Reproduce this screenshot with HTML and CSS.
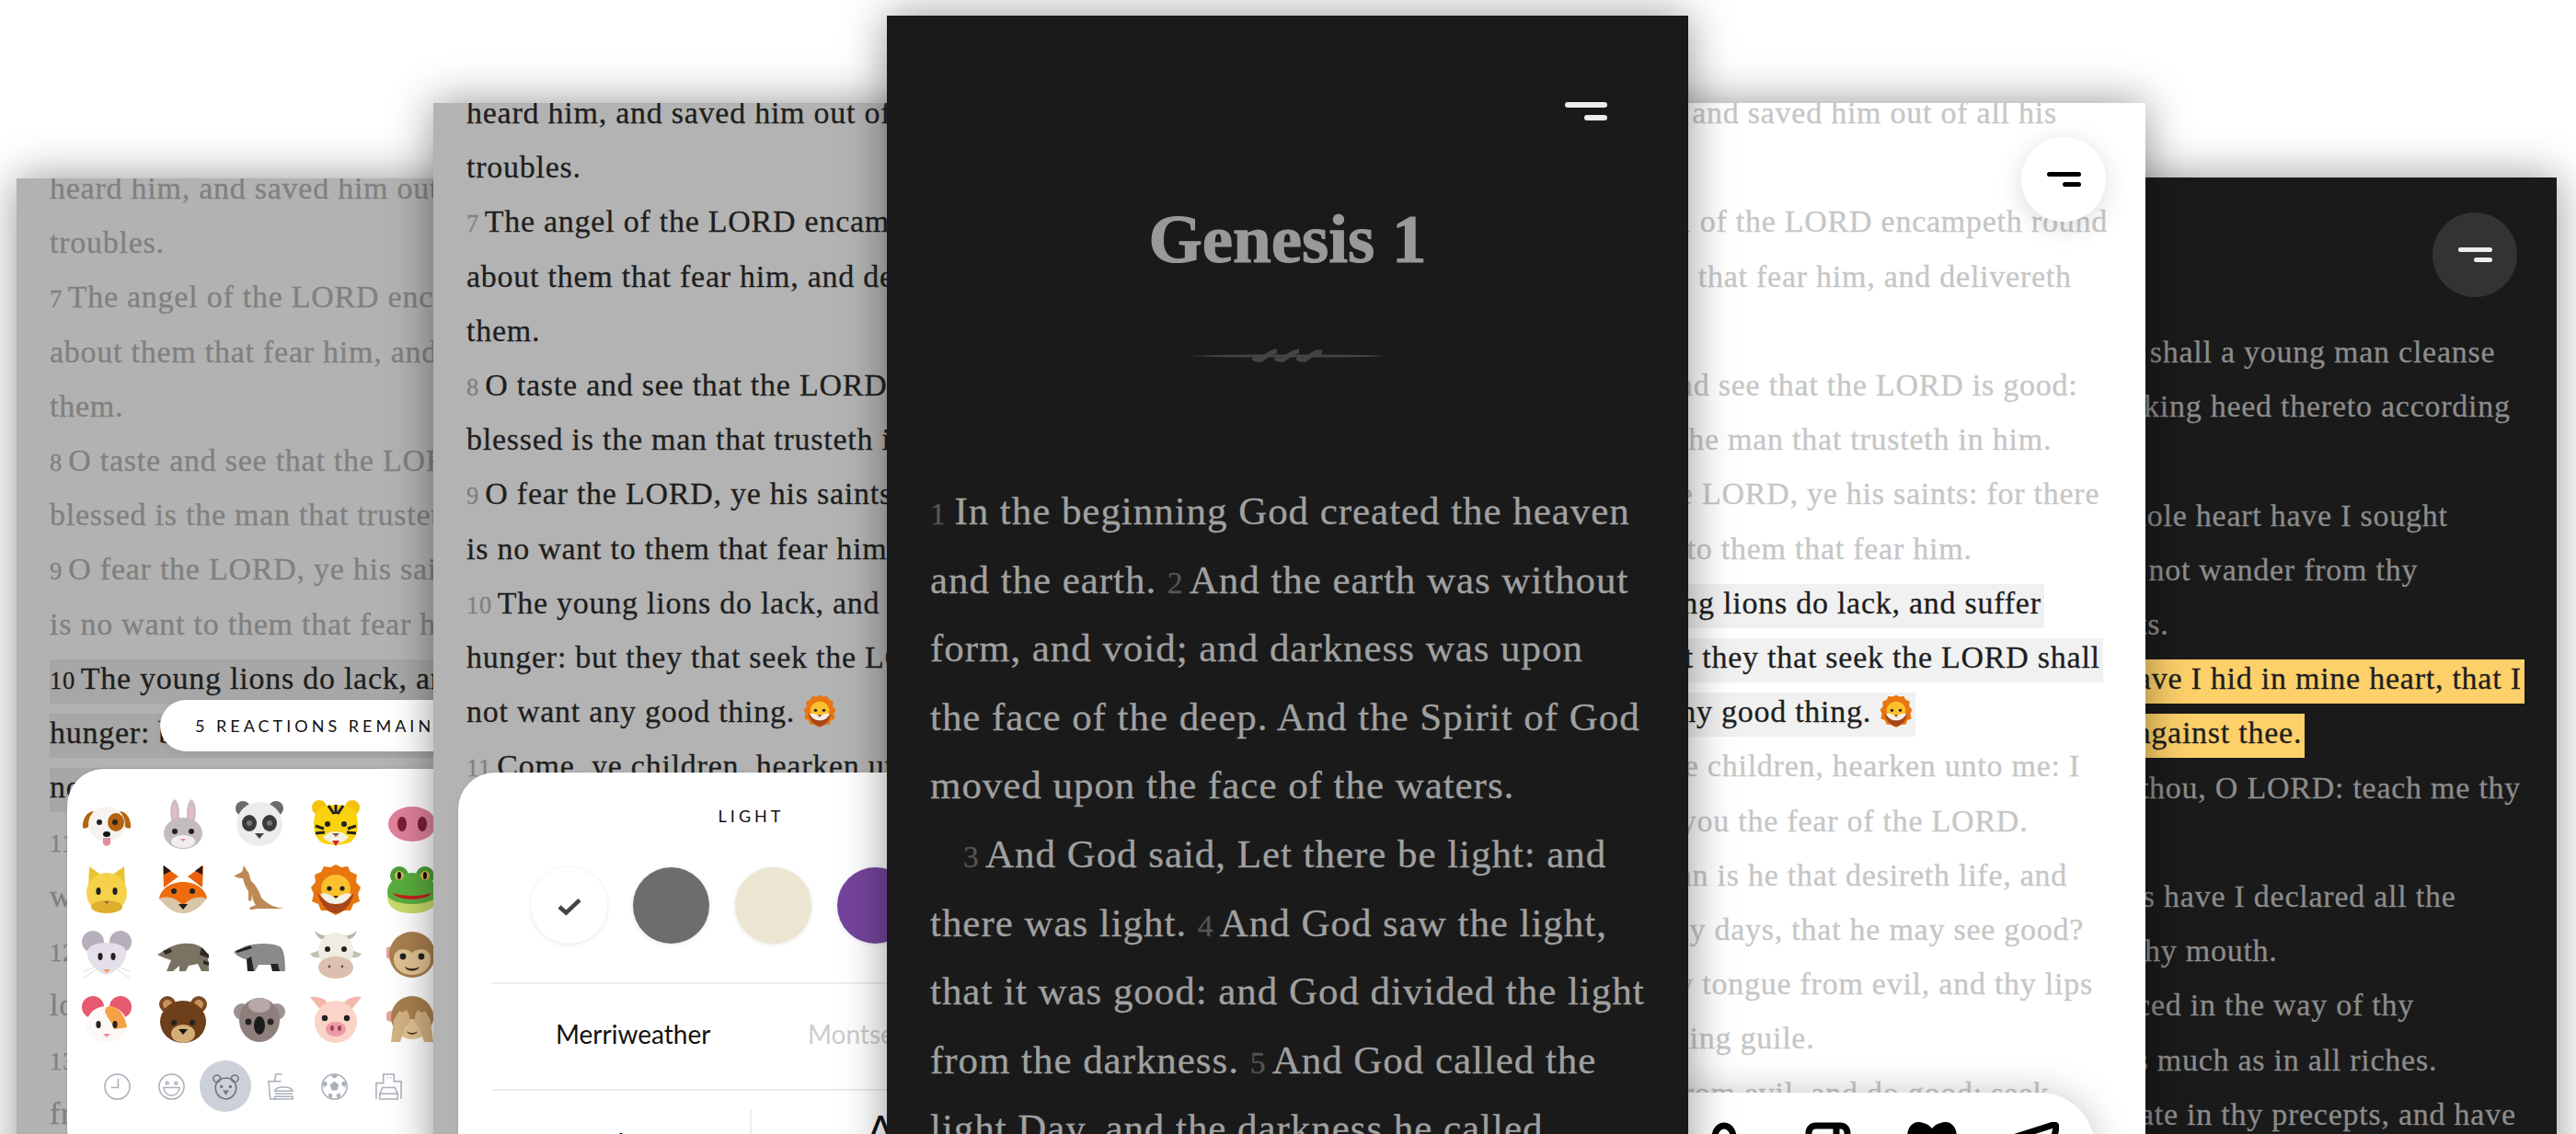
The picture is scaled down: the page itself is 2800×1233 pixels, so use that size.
FILE: index.html
```html
<!DOCTYPE html>
<html lang="en">

<head>
    <meta charset="UTF-8">
    <title>Bible reader screens</title>
    <link rel="stylesheet" href="styles.css">
</head>

<body>
    <svg class="sprites" width="0" height="0">
        <symbol id="e-dog" viewBox="0 0 56 56">
            <path d="M14 14C6 14 1 24 2 32c3 2 7-1 9-5z" fill="#b4630f"/><path d="M42 14c8 0 13 10 12 18-3 2-7-1-9-5z" fill="#b4630f"/>
            <ellipse cx="28" cy="28" rx="20" ry="19" fill="#f6f3ef"/><ellipse cx="38" cy="26" rx="9" ry="10" fill="#b4630f"/>
            <circle cx="20" cy="26" r="3" fill="#222"/><circle cx="37" cy="26" r="3" fill="#222"/><ellipse cx="28" cy="39" rx="4" ry="3" fill="#111"/>
            <path d="M24 43h8v5c0 5-8 5-8 0z" fill="#e58a9b"/>
        </symbol>
        <symbol id="e-rabbit" viewBox="0 0 56 56">
            <path d="M17 30C12 16 14 4 19 1c5 3 6 15 4 28z" fill="#c9bfc2"/><path d="M39 30c5-14 3-26-2-29-5 3-6 15-4 28z" fill="#c9bfc2"/>
            <path d="M18 24c-2-8-1-14 1-18 2 4 3 11 2 18zM38 24c2-8 1-14-1-18-2 4-3 11-2 18z" fill="#eab9c4"/>
            <ellipse cx="28" cy="38" rx="21" ry="17" fill="#c4bbbe"/><ellipse cx="28" cy="47" rx="13" ry="7" fill="#f1ecee"/>
            <circle cx="19" cy="36" r="3" fill="#222"/><circle cx="37" cy="36" r="3" fill="#222"/><path d="M25 44h6l-3 3z" fill="#e58a9b"/>
        </symbol>
        <symbol id="e-panda" viewBox="0 0 56 56">
            <circle cx="10" cy="11" r="8" fill="#6b6b6b"/><circle cx="46" cy="11" r="8" fill="#6b6b6b"/>
            <ellipse cx="28" cy="28" rx="25" ry="24" fill="#ececee"/><ellipse cx="17" cy="27" rx="8" ry="9" fill="#3a3a3c"/><ellipse cx="39" cy="27" rx="8" ry="9" fill="#3a3a3c"/>
            <circle cx="17" cy="27" r="3" fill="#777"/><circle cx="39" cy="27" r="3" fill="#777"/><path d="M23 38h10l-5 6z" fill="#444"/>
        </symbol>
        <symbol id="e-tiger" viewBox="0 0 56 56">
            <circle cx="10" cy="10" r="8" fill="#f4c20d"/><circle cx="46" cy="10" r="8" fill="#f4c20d"/>
            <path d="M6 16C10 4 46 4 50 16c3 10 3 22-4 30-5 6-31 6-36 0-7-8-7-20-4-30z" fill="#fad20f"/>
            <path d="M28 7v10M20 8l6 9M36 8l-6 9M6 30l9 3M6 38l10-1M50 30l-9 3M50 38l-10-1" stroke="#222" stroke-width="3"/>
            <circle cx="19" cy="28" r="3" fill="#222"/><circle cx="37" cy="28" r="3" fill="#222"/>
            <path d="M14 42c8-8 20-8 28 0-6 9-22 9-28 0z" fill="#f5efe3"/><path d="M24 38h8l-4 4z" fill="#7a5b4a"/><path d="M24 46h8l-4 6z" fill="#d2232a"/>
        </symbol>
        <symbol id="e-snout" viewBox="0 0 56 56">
            <ellipse cx="28" cy="28" rx="26" ry="19" fill="#e0829a"/><ellipse cx="17" cy="28" rx="5" ry="8" fill="#7b1f38"/><ellipse cx="39" cy="28" rx="5" ry="8" fill="#7b1f38"/>
        </symbol>
        <symbol id="e-cat" viewBox="0 0 56 56">
            <path d="M8 26L9 3l14 10zM48 26L47 3 33 13z" fill="#e9c233"/>
            <ellipse cx="28" cy="32" rx="22" ry="22" fill="#f6d24a"/><ellipse cx="28" cy="47" rx="17" ry="7" fill="#dfae2e"/>
            <ellipse cx="19" cy="30" rx="2.6" ry="4" fill="#222"/><ellipse cx="37" cy="30" rx="2.6" ry="4" fill="#222"/><path d="M25 41h6l-3 3z" fill="#8a6a4f"/>
        </symbol>
        <symbol id="e-fox" viewBox="0 0 56 56">
            <path d="M7 26L6 2l17 12zM49 26L50 2 33 14z" fill="#e9620b"/><path d="M7 12l0-10 8 6zM49 12l0-10-8 6z" fill="#2b1a12"/>
            <path d="M2 38C6 14 50 14 54 38L28 54z" fill="#ef6c0c"/><path d="M2 38c10-4 20 0 26 8 6-8 16-12 26-8-8 10-16 16-26 16S10 48 2 38z" fill="#d8c6a8"/>
            <circle cx="18" cy="30" r="3" fill="#222"/><circle cx="38" cy="30" r="3" fill="#222"/><path d="M23 44h10l-5 6z" fill="#1c1c1c"/>
        </symbol>
        <symbol id="e-kangaroo" viewBox="0 0 56 56">
            <path d="M1 13l8-4 2-7 3 5c4 4 3 8 5 12 6 5 9 12 11 18 7 8 16 11 25 12H26l-6 1c-3 0-4-2-1-3l5-2c-3-4-4-8-4-12l-1 8-3-1 0-10c-4-6-5-10-6-14-4 0-8-1-10-3z" fill="#bd8a55"/>
        </symbol>
        <symbol id="e-lion" viewBox="0 0 56 56">
            <path d="M28 1l6 3 7-1 3 6 7 3-1 8 5 6-3 7 2 8-7 3-3 7-7 0-9 5-9-5-7 0-3-7-7-3 2-8-3-7 5-6-1-8 7-3 3-6 7 1z" fill="#e87611"/>
            <path d="M8 32c4 14 12 22 20 22s16-8 20-22l-6 6H14z" fill="#a8451a"/>
            <ellipse cx="28" cy="27" rx="16" ry="15" fill="#fbc02d"/><path d="M11 33c6-2 12 1 17 5 5-4 11-7 17-5-4 8-10 11-17 11s-13-3-17-11z" fill="#f4f0e6"/>
            <circle cx="21" cy="27" r="2.6" fill="#222"/><circle cx="35" cy="27" r="2.6" fill="#222"/><path d="M25 35h6l-3 3z" fill="#3a2a20"/>
        </symbol>
        <symbol id="e-frog" viewBox="0 0 56 56">
            <circle cx="14" cy="13" r="10" fill="#4c9f38"/><circle cx="42" cy="13" r="10" fill="#4c9f38"/>
            <ellipse cx="28" cy="31" rx="27" ry="21" fill="#59ae3e"/><path d="M1 35c8 12 46 12 54 0 0 14-12 19-27 19S1 49 1 35z" fill="#c8dc6d"/>
            <circle cx="14" cy="13" r="5" fill="#d9b64a"/><circle cx="42" cy="13" r="5" fill="#d9b64a"/><ellipse cx="14" cy="13" rx="2" ry="4" fill="#111"/><ellipse cx="42" cy="13" rx="2" ry="4" fill="#111"/>
            <path d="M7 32c12 4 30 4 42 0-4 9-38 9-42 0z" fill="#c6211f"/>
        </symbol>
        <symbol id="e-mouse" viewBox="0 0 56 56">
            <circle cx="13" cy="14" r="12" fill="#b6afbb"/><circle cx="43" cy="14" r="12" fill="#b6afbb"/>
            <path d="M7 24C10 12 46 12 49 24c2 12-12 24-21 26C19 48 5 36 7 24z" fill="#e4dfe8"/>
            <ellipse cx="21" cy="30" rx="2.6" ry="4" fill="#222"/><ellipse cx="35" cy="30" rx="2.6" ry="4" fill="#222"/><path d="M24 44h8l-4 4z" fill="#ee9a66"/>
            <path d="M3 46l13-5M2 54l15-10M53 46l-13-5M54 54L39 44" stroke="#ddd" stroke-width="1"/>
        </symbol>
        <symbol id="e-raccoon" viewBox="0 0 56 56">
            <path d="M0 28l10-6c12-8 30-8 38-2 6 4 8 12 8 26h-8l-4-8-10 2-3 6h-7l0-6-7 6h-7l5-12C8 32 4 30 0 28z" fill="#7a7263"/>
            <path d="M48 20l8 8v4l-10-4zM50 34l6 2v4l-6-2z" fill="#2e2b26"/><path d="M6 24l8-3 2 4-7 3z" fill="#2e2b26"/>
        </symbol>
        <symbol id="e-badger" viewBox="0 0 56 56">
            <path d="M0 25l12-6c12-4 30-4 38 0 5 3 6 14 6 27h-8l-3-7H27l-4 7h-8l3-12C10 33 4 30 0 25z" fill="#8a8a88"/>
            <path d="M2 24l16-6 2 3-16 5zM14 33l5-3 3 16h-7zM40 38h8l2 8h-8z" fill="#23231f"/>
        </symbol>
        <symbol id="e-cow" viewBox="0 0 56 56">
            <path d="M14 12C9 10 6 6 5 2c4 4 10 5 14 6zM42 12c5-2 8-6 9-10-4 4-10 5-14 6z" fill="#b9b5a7"/><path d="M11 23L0 27c3 5 9 5 14 3zM45 23l11 4c-3 5-9 5-14 3z" fill="#c4c0b2"/>
            <ellipse cx="28" cy="24" rx="19" ry="20" fill="#efece2"/><ellipse cx="28" cy="42" rx="19" ry="12" fill="#dcc0ad"/>
            <circle cx="19" cy="22" r="3" fill="#222"/><circle cx="37" cy="22" r="3" fill="#222"/><circle cx="21" cy="41" r="1.4" fill="#6a4c3c"/><circle cx="35" cy="41" r="1.4" fill="#6a4c3c"/>
        </symbol>
        <symbol id="e-monkey" viewBox="0 0 56 56">
            <circle cx="5" cy="26" r="7" fill="#e8a49a"/><circle cx="51" cy="26" r="7" fill="#e8a49a"/>
            <circle cx="28" cy="28" r="25" fill="#a97f4f"/><path d="M8 33c0-14 15-12 20-7 5-5 20-7 20 7 0 10-9 17-20 17S8 43 8 33z" fill="#e1c394"/>
            <circle cx="18" cy="30" r="3.4" fill="#222"/><circle cx="38" cy="30" r="3.4" fill="#222"/><path d="M20 41c5 3 11 3 16 0-2 6-14 6-16 0z" fill="#3a2518"/>
        </symbol>
        <symbol id="e-hamster" viewBox="0 0 56 56">
            <circle cx="13" cy="14" r="12" fill="#e6596f"/><circle cx="43" cy="14" r="12" fill="#e6596f"/>
            <path d="M6 34C6 6 50 6 50 34c0 12-12 18-22 18S6 46 6 34z" fill="#fbf8f5"/><path d="M28 14c10-4 20 8 22 22l-14 2c-2-8-8-12-10-20z" fill="#f6a144"/>
            <ellipse cx="19" cy="33" rx="2.6" ry="4" fill="#222"/><ellipse cx="37" cy="33" rx="2.6" ry="4" fill="#222"/><path d="M24 43h8l-4 4z" fill="#ee8f9c"/>
        </symbol>
        <symbol id="e-bear" viewBox="0 0 56 56">
            <circle cx="11" cy="11" r="9" fill="#7d4a22"/><circle cx="45" cy="11" r="9" fill="#7d4a22"/><circle cx="11" cy="11" r="5" fill="#c9925c"/><circle cx="45" cy="11" r="5" fill="#c9925c"/>
            <ellipse cx="28" cy="30" rx="25" ry="23" fill="#6e3f1b"/><ellipse cx="28" cy="43" rx="13" ry="10" fill="#d5ad78"/>
            <circle cx="18" cy="31" r="3" fill="#222"/><circle cx="38" cy="31" r="3" fill="#222"/><path d="M23 38h10l-5 6z" fill="#111"/>
        </symbol>
        <symbol id="e-koala" viewBox="0 0 56 56">
            <circle cx="9" cy="19" r="9" fill="#9d9290"/><circle cx="47" cy="19" r="9" fill="#9d9290"/>
            <ellipse cx="28" cy="28" rx="22" ry="24" fill="#8e7f7d"/><ellipse cx="28" cy="12" rx="12" ry="8" fill="#b6a9a7"/>
            <circle cx="16" cy="30" r="3.4" fill="#222"/><circle cx="40" cy="30" r="3.4" fill="#222"/><ellipse cx="28" cy="34" rx="6" ry="10" fill="#1c1c1c"/>
        </symbol>
        <symbol id="e-pig" viewBox="0 0 56 56">
            <path d="M12 18L0 3c6-1 16 0 20 8zM44 18L56 3c-6-1-16 0-20 8z" fill="#f4b7ab"/>
            <ellipse cx="28" cy="30" rx="23" ry="23" fill="#fbd3c8"/><circle cx="16" cy="26" r="3.2" fill="#222"/><circle cx="40" cy="26" r="3.2" fill="#222"/>
            <ellipse cx="28" cy="38" rx="11" ry="8" fill="#ee9aa6"/><ellipse cx="24" cy="37" rx="2" ry="3" fill="#9c3f56"/><ellipse cx="32" cy="37" rx="2" ry="3" fill="#9c3f56"/>
        </symbol>
        <symbol id="e-noevil" viewBox="0 0 56 56">
            <circle cx="5" cy="24" r="6" fill="#e8a49a"/><circle cx="51" cy="24" r="6" fill="#e8a49a"/>
            <circle cx="28" cy="25" r="23" fill="#a97f4f"/><ellipse cx="28" cy="38" rx="15" ry="11" fill="#e1c394"/>
            <path d="M5 52l3-24 6-10 4 2 3-3 3 3 2 10-6 6-5 16zM51 52l-3-24-6-10-4 2-3-3-3 3-2 10 6 6 5 16z" fill="#d4b282"/><path d="M22 40c4 3 8 3 12 0-2 5-10 5-12 0z" fill="#3a2518"/>
        </symbol>
    </svg>

    <div class="stage">

        <!-- far left, dimmed, reactions picker -->
        <section class="sheet sheet-far-left">
            <div class="verses">
                <div class="line">heard him, and saved him out of all his</div>
                <div class="line">troubles.</div>
                <div class="line"><span class="num">7</span> The angel of the LORD encampeth round</div>
                <div class="line">about them that fear him, and delivereth</div>
                <div class="line">them.</div>
                <div class="line"><span class="num">8</span> O taste and see that the LORD is good:</div>
                <div class="line">blessed is the man that trusteth in him.</div>
                <div class="line"><span class="num">9</span> O fear the LORD, ye his saints: for there</div>
                <div class="line">is no want to them that fear him.</div>
                <div class="line"><mark><span class="num">10</span> The young lions do lack, and suffer</mark></div>
                <div class="line"><mark>hunger: but they that seek the LORD shall</mark></div>
                <div class="line"><mark>not want any good thing.</mark></div>
                <div class="line"><span class="num">11</span> Come, ye children, hearken unto me: I</div>
                <div class="line">will teach you the fear of the LORD.</div>
                <div class="line"><span class="num">12</span> What man is he that desireth life, and</div>
                <div class="line">loveth many days, that he may see good?</div>
                <div class="line"><span class="num">13</span> Keep thy tongue from evil, and thy lips</div>
                <div class="line">from speaking guile.</div>
            </div>

            <div class="reactions-pill">5 REACTIONS REMAINING</div>

            <div class="picker">
                <div class="emoji-grid">
                    <svg class="emoji"><use href="#e-dog"/></svg>
                    <svg class="emoji"><use href="#e-rabbit"/></svg>
                    <svg class="emoji"><use href="#e-panda"/></svg>
                    <svg class="emoji"><use href="#e-tiger"/></svg>
                    <svg class="emoji"><use href="#e-snout"/></svg>
                    <svg class="emoji"><use href="#e-cat"/></svg>
                    <svg class="emoji"><use href="#e-fox"/></svg>
                    <svg class="emoji"><use href="#e-kangaroo"/></svg>
                    <svg class="emoji"><use href="#e-lion"/></svg>
                    <svg class="emoji"><use href="#e-frog"/></svg>
                    <svg class="emoji"><use href="#e-mouse"/></svg>
                    <svg class="emoji"><use href="#e-raccoon"/></svg>
                    <svg class="emoji"><use href="#e-badger"/></svg>
                    <svg class="emoji"><use href="#e-cow"/></svg>
                    <svg class="emoji"><use href="#e-monkey"/></svg>
                    <svg class="emoji"><use href="#e-hamster"/></svg>
                    <svg class="emoji"><use href="#e-bear"/></svg>
                    <svg class="emoji"><use href="#e-koala"/></svg>
                    <svg class="emoji"><use href="#e-pig"/></svg>
                    <svg class="emoji"><use href="#e-noevil"/></svg>
                </div>
                <div class="emoji-tabs">
                    <span class="tab">
                        <svg viewBox="0 0 32 32"><circle cx="16" cy="16" r="14"/><path d="M17 7v10H9"/></svg>
                    </span>
                    <span class="tab">
                        <svg viewBox="0 0 32 32"><circle cx="16" cy="16" r="14"/><circle cx="11" cy="12" r="1.5"/><circle cx="21" cy="12" r="1.5"/><path d="M7 17h18c-1 12-17 12-18 0z"/></svg>
                    </span>
                    <span class="tab tab-active">
                        <svg viewBox="0 0 32 32"><circle cx="6" cy="7" r="4"/><circle cx="26" cy="7" r="4"/><path d="M6 11c3-6 17-6 20 0 4 8 0 18-10 19C6 29 2 19 6 11z"/><circle cx="11" cy="16" r="1"/><circle cx="21" cy="16" r="1"/><path d="M14 21h4l-2 3z"/></svg>
                    </span>
                    <span class="tab">
                        <svg viewBox="0 0 32 32"><path d="M2 10h15M3 10l2 20h6M10 10l1-8h7"/><path d="M10 21c1-6 19-6 20 0zM10 24h20M10 27h20v3H10z"/></svg>
                    </span>
                    <span class="tab">
                        <svg viewBox="0 0 32 32"><circle cx="16" cy="16" r="14"/><path class="solid" d="M16 10l5 4-2 6h-6l-2-6zM16 2l4 2-4 3-4-3zM29 11l-1 6-4-3 1-4zM3 11l1 6 4-3-1-4zM9 27l4 2 1-4-4-2zM23 27l-4 2-1-4 4-2z"/></svg>
                    </span>
                    <span class="tab">
                        <svg viewBox="0 0 32 32"><path d="M2 30V12h8V2h12v8h8v20"/><path d="M6 30v-6l3-7h14l3 7v6zM6 24h20M14 6h1M18 6h1"/></svg>
                    </span>
                </div>
            </div>
        </section>

        <!-- left, dimmed, theme and font settings -->
        <section class="sheet sheet-left">
            <div class="verses">
                <div class="line">heard him, and saved him out of all his</div>
                <div class="line">troubles.</div>
                <div class="line"><span class="num">7</span> The angel of the LORD encampeth round</div>
                <div class="line">about them that fear him, and delivereth</div>
                <div class="line">them.</div>
                <div class="line"><span class="num">8</span> O taste and see that the LORD is good:</div>
                <div class="line">blessed is the man that trusteth in him.</div>
                <div class="line"><span class="num">9</span> O fear the LORD, ye his saints: for there</div>
                <div class="line">is no want to them that fear him.</div>
                <div class="line"><span class="num">10</span> The young lions do lack, and suffer</div>
                <div class="line">hunger: but they that seek the LORD shall</div>
                <div class="line">not want any good thing. <svg class="emoji-inline"><use href="#e-lion"/></svg></div>
                <div class="line"><span class="num">11</span> Come, ye children, hearken unto me: I</div>
            </div>

            <div class="settings">
                <div class="settings-title">LIGHT</div>
                <div class="swatches">
                    <span class="swatch swatch-white">
                        <svg viewBox="0 0 30 24"><path d="M3 13l8 7L27 5"/></svg>
                    </span>
                    <span class="swatch swatch-grey"></span>
                    <span class="swatch swatch-cream"></span>
                    <span class="swatch swatch-purple"></span>
                </div>
                <div class="font-row">
                    <span class="font-name">Merriweather</span>
                    <span class="font-name font-off">Montserrat</span>
                </div>
                <div class="size-row">
                    <span class="size-small">A</span>
                    <span class="size-big">A</span>
                </div>
            </div>
        </section>

        <!-- right, white, highlighted verse -->
        <section class="sheet sheet-right">
            <div class="verses">
                <div class="line">heard him, and saved him out of all his</div>
                <div class="line">troubles.</div>
                <div class="line"><span class="num">7</span> The angel of the LORD encampeth round</div>
                <div class="line">about them that fear him, and delivereth</div>
                <div class="line">them.</div>
                <div class="line"><span class="num">8</span> O taste and see that the LORD is good:</div>
                <div class="line">blessed is the man that trusteth in him.</div>
                <div class="line"><span class="num">9</span> O fear the LORD, ye his saints: for there</div>
                <div class="line">is no want to them that fear him.</div>
                <div class="line"><mark><span class="num">10</span> The young lions do lack, and suffer</mark></div>
                <div class="line"><mark>hunger: but they that seek the LORD shall</mark></div>
                <div class="line"><mark>not want any good thing. <svg class="emoji-inline"><use href="#e-lion"/></svg></mark></div>
                <div class="line"><span class="num">11</span> Come, ye children, hearken unto me: I</div>
                <div class="line">will teach you the fear of the LORD.</div>
                <div class="line"><span class="num">12</span> What man is he that desireth life, and</div>
                <div class="line">loveth many days, that he may see good?</div>
                <div class="line"><span class="num">13</span> Keep thy tongue from evil, and thy lips</div>
                <div class="line">from speaking guile.</div>
                <div class="line"><span class="num">14</span> Depart from evil, and do good; seek</div>
            </div>

            <button class="menu-btn menu-btn-light"><span class="bar"></span><span class="bar bar-short"></span></button>

            <div class="action-bar">
                <svg class="action" viewBox="0 0 50 50"><path d="M15 50V16C15 8 21 4 25 4s10 4 10 12v34"/></svg>
                <svg class="action" viewBox="0 0 50 50"><path d="M4 50V12c0-5 3-8 8-8h26c5 0 8 3 8 8v38M34 4v22"/></svg>
                <svg class="action action-solid" viewBox="0 0 54 50"><path d="M27 7C23 2 17 0 12 0 5 0 0 7 0 16c0 14 17 28 27 34 10-6 27-20 27-34 0-9-5-16-12-16-5 0-11 2-15 7z"/></svg>
                <svg class="action" viewBox="0 0 50 50"><path d="M3 16L44 3c2 0 3 1 3 3L38 50"/></svg>
            </div>
        </section>

        <!-- far right, dark, yellow highlight -->
        <section class="sheet sheet-far-right">
            <button class="menu-btn menu-btn-dark"><span class="bar"></span><span class="bar bar-short"></span></button>
            <div class="verses">
                <div class="line"><span class="num">9</span> Wherewithal shall a young man cleanse</div>
                <div class="line">his way? by taking heed thereto according</div>
                <div class="line">to thy word.</div>
                <div class="line"><span class="num">10</span> With my whole heart have I sought</div>
                <div class="line">thee: O let me not wander from thy</div>
                <div class="line">commandments.</div>
                <div class="line"><mark><span class="num">11</span> Thy word have I hid in mine heart, that I</mark></div>
                <div class="line"><mark>might not sin against thee.</mark></div>
                <div class="line"><span class="num">12</span> Blessed art thou, O LORD: teach me thy</div>
                <div class="line">statutes.</div>
                <div class="line"><span class="num">13</span> With my lips have I declared all the</div>
                <div class="line">judgments of thy mouth.</div>
                <div class="line"><span class="num">14</span> I have rejoiced in the way of thy</div>
                <div class="line">testimonies, as much as in all riches.</div>
                <div class="line"><span class="num">15</span> I will meditate in thy precepts, and have</div>
            </div>
        </section>

        <!-- centre, dark, chapter opening -->
        <section class="sheet sheet-centre">
            <div class="centre-top">
                <div class="menu-plain"><span class="bar"></span><span class="bar bar-short"></span></div>
            </div>
            <h1 class="chapter-title">Genesis 1</h1>
            <svg class="flourish" viewBox="0 0 218 16">
                <path class="flourish-line" d="M0 8Q35 6.500 72 6.500L146 6.500Q185 6.500 218 8Q185 9.500 146 9.500L72 9.500Q35 9.500 0 8z"/>
                <path class="flourish-knot" d="M71 10Q77 15 84 9T97 3M95 10Q101 15 108 9T121 3M119 10Q125 15 132 9T146 4"/>
            </svg>
            <div class="verses verses-big">
                <div class="line"><span class="num">1</span> In the beginning God created the heaven</div>
                <div class="line">and the earth. <span class="num">2</span> And the earth was without</div>
                <div class="line">form, and void; and darkness was upon</div>
                <div class="line">the face of the deep. And the Spirit of God</div>
                <div class="line">moved upon the face of the waters.</div>
                <div class="line line-indent"><span class="num">3</span> And God said, Let there be light: and</div>
                <div class="line">there was light. <span class="num">4</span> And God saw the light,</div>
                <div class="line">that it was good: and God divided the light</div>
                <div class="line">from the darkness. <span class="num">5</span> And God called the</div>
                <div class="line">light Day, and the darkness he called</div>
            </div>
        </section>
    </div>
</body>

</html>
```

FILE: styles.css
```css
* {
    box-sizing: border-box;
}

html,
body {
    margin: 0;
    padding: 0;
    height: 100%;
    overflow: hidden;
    background-color: #fff;
}

.sprites {
    position: absolute;
}

.stage {
    position: relative;
    width: 2800px;
    height: 1233px;
    overflow: hidden;
    font-family: "Liberation Serif", serif;
}

/* the five phone screens sit on a free canvas */
.sheet {
    position: absolute;
    width: 691px;
    height: 1300px;
    overflow: hidden;
    box-shadow: 0 0 45px rgba(0, 0, 0, 0.42);
}

.sheet-far-left {
    left: 18px;
    top: 194px;
    z-index: 1;
    background-color: #b2b2b2;
    color: #808080;
}

.sheet-left {
    left: 471px;
    top: 112px;
    z-index: 2;
    background-color: #b3b3b3;
    color: #1e1e1e;
}

.sheet-right {
    left: 1641px;
    top: 112px;
    z-index: 2;
    background-color: #fff;
    color: #c6c6c6;
}

.sheet-far-right {
    left: 2088px;
    top: 193px;
    z-index: 1;
    background-color: #1a1a1a;
    color: #8c8c8c;
}

.sheet-centre {
    left: 964px;
    top: 17px;
    width: 871px;
    z-index: 3;
    background-color: #1a1a1a;
    color: #a0a0a0;
}

/* verse text */
.verses {
    padding-left: 36px;
    margin-top: -19px;
    font-size: 34px;
    letter-spacing: 0.75px;
    line-height: 59.2px;
    white-space: nowrap;
    -webkit-text-stroke: 0.3px currentColor;
}

.sheet-far-right .verses {
    margin-top: 160px;
}

.verses-big {
    padding-left: 47px;
    margin-top: 124px;
    font-size: 43px;
    letter-spacing: 0.95px;
    line-height: 74.6px;
}

.line-indent {
    padding-left: 36px;
}

.num {
    font-size: 0.78em;
    line-height: 1;
    margin-right: -3px;
    color: #808080;
}

.sheet-centre .num {
    color: #555;
}

.sheet-far-right .num {
    color: #666;
}

.sheet-right .num {
    color: #ccc;
}

mark {
    padding: 2px 3px 9px 0;
    color: #1e1e1e;
}

mark .num {
    color: #1e1e1e;
}

.sheet-far-left mark {
    background-color: #a7a7a7;
}

.sheet-right mark {
    background-color: #f1f1f1;
}

.sheet-far-right mark {
    background-color: #fdd06a;
}

.emoji-inline {
    width: 36px;
    height: 36px;
    vertical-align: -6px;
}

/* menu buttons */
.bar {
    display: block;
    height: 5px;
    width: 37px;
    border-radius: 3px;
    background-color: currentColor;
}

.bar-short {
    width: 20px;
    margin-top: 6px;
}

.menu-btn {
    position: absolute;
    right: 43px;
    top: 37px;
    width: 92px;
    height: 92px;
    padding: 0 27px 0 0;
    border: none;
    border-radius: 50%;
    display: flex;
    flex-direction: column;
    align-items: flex-end;
    justify-content: center;
}

.menu-btn-light {
    color: #000;
    background-color: #fff;
    box-shadow: 0 6px 30px rgba(0, 0, 0, 0.14);
}

.menu-btn-dark {
    color: #eee;
    background-color: #333;
    top: 38px;
}

.centre-top {
    display: flex;
    justify-content: flex-end;
    padding: 94px 88px 0 0;
}

.menu-plain {
    color: #eee;
    display: flex;
    flex-direction: column;
    align-items: flex-end;
}

.menu-plain .bar {
    width: 46px;
    height: 6px;
}

.menu-plain .bar-short {
    width: 25px;
    margin-top: 8px;
}

.chapter-title {
    margin: 84px 0 0;
    text-align: center;
    font-size: 75px;
    line-height: 90px;
    font-weight: bold;
    color: #999;
    -webkit-text-stroke: 1.2px #999;
}

.flourish {
    display: block;
    width: 218px;
    height: 16px;
    margin: 74px auto 0;
    overflow: visible;
}

.flourish-line {
    fill: #444;
}

.flourish-knot {
    fill: none;
    stroke: #444;
    stroke-width: 5;
}

/* reactions picker */
.reactions-pill {
    position: absolute;
    left: 156px;
    top: 567px;
    width: 420px;
    height: 56px;
    padding-left: 38px;
    border-radius: 28px;
    background-color: #fff;
    color: #111;
    font-family: Lato, sans-serif;
    font-size: 18px;
    letter-spacing: 4px;
    line-height: 56px;
    white-space: nowrap;
    box-shadow: 0 2px 8px rgba(0, 0, 0, 0.08);
}

.picker {
    position: absolute;
    left: 55px;
    top: 642px;
    width: 581px;
    height: 430px;
    border-radius: 40px;
    background-color: #fff;
    box-shadow: 0 0 4px rgba(0, 0, 0, 0.1);
}

.emoji-grid {
    display: grid;
    grid-template-columns: repeat(5, 56px);
    grid-auto-rows: 56px;
    column-gap: 27px;
    row-gap: 15px;
    padding: 32px 0 0 15px;
}

.emoji {
    width: 56px;
    height: 56px;
}

.emoji-tabs {
    display: flex;
    align-items: center;
    gap: 3px;
    padding: 16px 0 0 26px;
}

.tab {
    width: 56px;
    height: 56px;
    border-radius: 50%;
    display: flex;
    align-items: center;
    justify-content: center;
}

.tab svg {
    width: 31px;
    height: 31px;
    fill: none;
    stroke: #aab0ba;
    stroke-width: 1.6;
}

.tab .solid {
    fill: #aab0ba;
    stroke: none;
}

.tab-active {
    background-color: #ccd0d8;
}

.tab-active svg {
    stroke: #6f747c;
}

/* theme settings */
.settings {
    position: absolute;
    left: 27px;
    top: 728px;
    width: 637px;
    height: 460px;
    padding: 34px 37px 0;
    border-radius: 40px;
    background-color: #fff;
    font-family: Lato, sans-serif;
    box-shadow: 0 0 4px rgba(0, 0, 0, 0.1);
}

.settings-title {
    text-align: center;
    font-size: 18px;
    line-height: 26px;
    letter-spacing: 4px;
    color: #111;
}

.swatches {
    display: flex;
    gap: 28px;
    padding: 43px 0 42px 42px;
    border-bottom: 2px solid #ececec;
}

.swatch {
    width: 83px;
    height: 83px;
    border-radius: 50%;
    display: flex;
    align-items: center;
    justify-content: center;
    box-shadow: 0 1px 5px rgba(0, 0, 0, 0.1);
}

.swatch svg {
    width: 28px;
    height: 22px;
    fill: none;
    stroke: #444;
    stroke-width: 5;
}

.swatch-white {
    background-color: #fff;
}

.swatch-grey {
    background-color: #6d6d6d;
}

.swatch-cream {
    background-color: #ebe5d1;
}

.swatch-purple {
    background-color: #74449b;
}

.font-row {
    display: flex;
    align-items: center;
    height: 116px;
    padding: 0 0 6px 69px;
    border-bottom: 2px solid #ececec;
    font-size: 28px;
    color: #111;
}

.font-name {
    flex: none;
    width: 274px;
}

.font-off {
    color: #ccc;
}

.size-row {
    display: flex;
    margin-top: 20px;
    height: 80px;
}

.size-small,
.size-big {
    width: 50%;
    text-align: center;
    color: #111;
}

.size-small {
    font-size: 24px;
    line-height: 40px;
    padding-top: 14px;
    border-right: 2px solid #ececec;
}

.size-big {
    font-size: 44px;
    line-height: 44px;
}

/* bottom action bar */
.action-bar {
    position: absolute;
    right: 55px;
    top: 1076px;
    width: 581px;
    height: 120px;
    padding: 32px 39px 0 0;
    display: flex;
    justify-content: flex-end;
    gap: 63px;
    border-radius: 60px;
    background-color: #fff;
    box-shadow: 0 0 40px rgba(0, 0, 0, 0.22);
}

.action {
    width: 50px;
    height: 50px;
    fill: none;
    stroke: #000;
    stroke-width: 7;
}

.action-solid {
    width: 54px;
    margin: 0 -2px;
    fill: #000;
    stroke: none;
}
```
